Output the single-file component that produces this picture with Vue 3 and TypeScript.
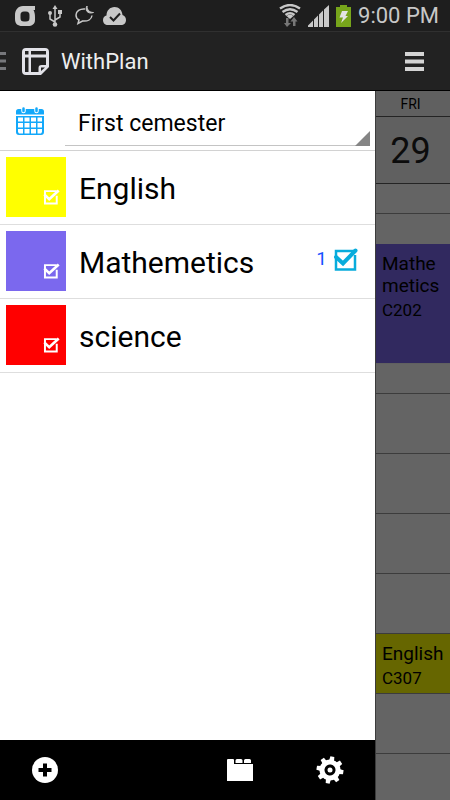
<script setup lang="ts">
import { ref } from 'vue'

interface Subject {
  name: string
  tone: string
  tasks: number
}

interface Slot {
  kind: 'empty' | 'lesson'
  size: string
  tone?: string
  title?: string
  room?: string
}

const semesters = ['First cemester']
const semester = ref(semesters[0])

const subjects: Subject[] = [
  { name: 'English', tone: 'yellow', tasks: 0 },
  { name: 'Mathemetics', tone: 'violet', tasks: 1 },
  { name: 'science', tone: 'red', tasks: 0 },
]

const slots: Slot[] = [
  { kind: 'empty', size: 'half' },
  { kind: 'empty', size: 'lead' },
  { kind: 'lesson', size: 'double', tone: 'violet', title: 'Mathemetics', room: 'C202' },
  { kind: 'empty', size: 'half' },
  { kind: 'empty', size: 'full' },
  { kind: 'empty', size: 'full' },
  { kind: 'empty', size: 'full' },
  { kind: 'empty', size: 'full' },
  { kind: 'lesson', size: 'full', tone: 'yellow', title: 'English', room: 'C307' },
  { kind: 'empty', size: 'full' },
]
</script>

<template>
  <div class="screen">
    <div class="status">
      <div class="status-group left">
        <svg class="carrier" width="20" height="20" viewBox="0 0 20 20">
          <path fill="currentColor" fill-rule="evenodd" d="M8 0H20V4H18.500C19.500 6 20 8 20 11V14C20 18 17 20 13 20H7C3 20 0 18 0 13V9C0 4 3 0 8 0ZM9 5.500C6.500 5.500 5.500 7 5.500 9V12C5.500 14.500 6.500 15.500 9 15.500H11C13.500 15.500 14.500 14.500 14.500 12V9C14.500 7 13.500 5.500 11 5.500Z" />
        </svg>
        <svg class="usb" width="14" height="22" viewBox="0 0 14 22" fill="none" stroke="currentColor" stroke-width="1.500">
          <path d="M7 3V19M7 17L2 14V8M7 15L12 12V7" />
          <path fill="currentColor" stroke="none" d="M7 0L9.500 4H4.500ZM10 5H14V9H10Z" />
          <circle cx="2" cy="8" r="2" fill="currentColor" stroke="none" />
          <circle cx="7" cy="19.500" r="2.300" fill="currentColor" stroke="none" />
        </svg>
        <svg class="chat" width="19" height="19" viewBox="0 0 19 19">
          <path d="M10 3C5 2.500 1 5 1 9C1 11.500 2 13 4 14L3 17.500L7.500 15C13 15.500 16.500 13 17 9.500" fill="none" stroke="currentColor" stroke-width="1.500" />
          <path d="M12 0C9.500 4 12.500 8.500 18.500 6.500C14.500 6.500 12 4 12 0Z" fill="currentColor" stroke="currentColor" />
        </svg>
        <svg class="cloud" width="23" height="18" viewBox="0 0 23 18">
          <path d="M5 18C2 18 0 16 0 13C0 10.500 1.500 9 3.500 8.500C3.500 3.500 7 0 11.500 0C16 0 19 3 19.500 8C21.500 8.500 23 10.500 23 13C23 16 21 18 18 18Z" fill="currentColor" />
          <path d="M7 10L10.500 13.500L17 6.500" fill="none" stroke="#202020" stroke-width="2" />
        </svg>
      </div>
      <div class="status-group right">
        <svg width="22" height="23" viewBox="0 0 22 23">
          <g fill="none" stroke="currentColor" stroke-width="2.300">
            <path d="M1 4.500Q11-2.500 21 4.500M3.500 8Q11 2.500 18.500 8M6.500 11Q11 7.500 15.500 11" />
          </g>
          <path d="M7.500 12Q11 9.500 14.500 12L11 15Z" fill="currentColor" />
          <path d="M7 14H9.500V19H12L8 23L5 19H7ZM14 22V17.500H11.500L15 13L18.500 17.500H16.500V22Z" fill="#777777" />
        </svg>
        <svg class="signal" width="21" height="22" viewBox="0 0 21 22">
          <path fill="currentColor" d="M0 22V20.500L5 15.500V22ZM6 22V14.500L10 10.500V22ZM11 22V9.500L15 5.500V22ZM16 22V4.500L21 0V22Z" />
        </svg>
        <svg class="battery" width="15" height="22" viewBox="0 0 15 22">
          <path fill="#77a51b" d="M4 0H11V2H15V22H0V2H4Z" />
          <path fill="#e4e4e4" d="M6 6H12L9.500 11H12L5 18L7 12.500H3.500Z" />
        </svg>
        <time>9:00 PM</time>
      </div>
    </div>

    <header class="appbar">
      <button class="brand" type="button">
        <svg class="edge" width="6" height="18" viewBox="0 0 6 18"><path d="M0 0H6V3H0ZM0 7.500H6V10.500H0ZM0 15H6V18H0Z" fill="#77787c" /></svg>
        <svg class="logo" width="27" height="27" viewBox="0 0 27 27">
          <path fill="#e2e2e8" fill-rule="evenodd" d="M4 0H23Q27 0 27 4V19L19 27H4Q0 27 0 23V4Q0 0 4 0ZM3 3V6.500H6.500V3ZM9 3V6.500H24V3ZM3 9.500V24H6.500V9.500ZM9 9.500V24H16.500V20Q16.500 17 19.500 17H24V9.500ZM19 19.500V23L23 19.500Z" />
        </svg>
        <span>WithPlan</span>
      </button>
      <button class="menu" type="button" aria-label="Menu">
        <svg width="19" height="19" viewBox="0 0 19 19"><path d="M0 0H19V4H0ZM0 7.500H19V11.500H0ZM0 15H19V19H0Z" fill="#d4d4d4" /></svg>
      </button>
    </header>

    <main class="content">
      <section class="drawer">
        <label class="picker">
          <svg width="28" height="28" viewBox="0 0 28 28">
            <path fill="#12a8fa" fill-rule="evenodd" d="M0 4.500Q0 2 2.500 2H25.500Q28 2 28 4.500V7.500H0ZM0 9H28V25Q28 28 25 28H3Q0 28 0 25ZM2 10.500V14.500H7V10.500ZM8.500 10.500V14.500H13.500V10.500ZM15 10.500V14.500H20V10.500ZM21.500 10.500V14.500H26V10.500ZM2 16V20.500H7V16ZM8.500 16V20.500H13.500V16ZM15 16V20.500H20V16ZM21.500 16V20.500H26V16ZM2 22V25L3 26.500H7V22ZM8.500 22V26.500H13.500V22ZM15 22V26.500H20V22ZM21.500 22V26.500H25L26 25V22Z" />
            <path d="M7.500 2V4M20.500 2V4" stroke="#ffffff" stroke-width="4.500" stroke-linecap="round" />
            <path d="M7.500 1.500V4M20.500 1.500V4" stroke="#12a8fa" stroke-width="2.500" stroke-linecap="round" />
          </svg>
          <span class="field">
            <select v-model="semester" aria-label="Semester">
              <option v-for="item in semesters" :key="item" :value="item">{{ item }}</option>
            </select>
          </span>
        </label>

        <ul class="subjects">
          <li v-for="subject in subjects" :key="subject.name" class="subject">
            <button class="tile" type="button" :class="subject.tone" :aria-label="subject.name + ' tasks'">
              <svg width="17" height="16" viewBox="0 0 26 24" fill="none" stroke="#ffffff">
                <path d="M21 3H3V22H21V10" stroke-width="3" />
                <path d="M2 8L9.500 15.500L24 2" stroke-width="4" />
              </svg>
            </button>
            <span class="name">{{ subject.name }}</span>
            <span v-if="subject.tasks" class="tasks">
              {{ subject.tasks }}
              <svg width="24" height="23" viewBox="0 0 24 23" fill="none" stroke="#08acdc">
                <path d="M20 3H2V21.500H21V7" stroke-width="2.500" />
                <path d="M2 9L9 15.500L21.500 2.500" stroke-width="4" stroke-linecap="round" />
              </svg>
            </span>
          </li>
        </ul>

        <nav class="toolbar">
          <button type="button" aria-label="Add">
            <svg width="26" height="26" viewBox="0 0 26 26"><circle cx="13" cy="13" r="13" fill="#ffffff" /><path d="M13 6.500V19.500M6.500 13H19.500" stroke="#000000" stroke-width="4" /></svg>
          </button>
          <button class="tabs" type="button" aria-label="Semesters">
            <svg width="26" height="22" viewBox="0 0 26 22"><path fill="#ffffff" d="M0 1Q0 0 1 0H6Q7 0 7 1V5H26V22H0ZM8.500 4V1.500Q8.500 0 10 0H14Q15.500 0 15.500 1.500V4ZM17 4V1.500Q17 0 18.500 0H22.500Q24 0 24 1.500V4Z" /></svg>
          </button>
          <button type="button" aria-label="Settings">
            <svg width="28" height="28" viewBox="0 0 28 28">
              <g transform="rotate(10 14 14)">
                <circle cx="14" cy="14" r="8" fill="none" stroke="#ffffff" stroke-width="5" />
                <path v-for="n in 8" :key="n" d="M11.500 5L12 0.500H16L16.500 5Z" fill="#ffffff" :transform="`rotate(${n * 45} 14 14)`" />
              </g>
              <circle cx="14" cy="14" r="2.500" fill="#ffffff" />
            </svg>
          </button>
        </nav>
      </section>

      <section class="day">
        <div class="weekday">FRI</div>
        <div class="date">29</div>
        <div v-for="(slot, index) in slots" :key="index" class="slot" :class="[slot.kind, slot.size, slot.tone]">
          <template v-if="slot.kind === 'lesson'">
            <div class="title">{{ slot.title }}</div>
            <div class="room">{{ slot.room }}</div>
          </template>
        </div>
      </section>
    </main>
  </div>
</template>

<style>
body {
  margin: 0;
  background: #646464;
}
</style>

<style scoped>
.screen {
  display: flex;
  flex-direction: column;
  min-height: 100vh;
  font-family: Roboto, "Liberation Sans", sans-serif;
  color: #000000;
}

button {
  padding: 0;
  border: 0;
  background: none;
  color: inherit;
  font: inherit;
}

svg {
  display: block;
  flex: none;
}

.status {
  display: flex;
  align-items: center;
  justify-content: space-between;
  box-sizing: border-box;
  height: 32px;
  padding: 0 11px 0 15px;
  border-bottom: 1px solid #303030;
  background: #1e1e1e;
  color: #c8c8c8;
}

.status-group {
  display: flex;
  align-items: center;
}

.left {
  gap: 13px;
}

.cloud {
  margin-left: -4px;
}

.right {
  gap: 7px;
}

.status time {
  font-size: 22px;
  line-height: 30px;
}

.appbar {
  display: flex;
  align-items: center;
  justify-content: space-between;
  box-sizing: border-box;
  height: 59px;
  padding-right: 26px;
  border-bottom: 1px solid #000000;
  background: #222222;
}

.brand {
  display: flex;
  align-items: center;
  color: #eeeeee;
  font-size: 22px;
  line-height: 28px;
}

.brand span {
  padding-top: 2px;
}

.logo {
  margin: 0 12px 0 16px;
}

.content {
  display: grid;
  flex: 1;
  grid-template-columns: minmax(0, 1fr) 75px;
}

.drawer {
  display: flex;
  flex-direction: column;
  background: #ffffff;
}

.picker {
  display: flex;
  align-items: center;
  gap: 21px;
  box-sizing: border-box;
  height: 60px;
  padding: 0 5px 0 16px;
  border-bottom: 1px solid #d2d2d2;
}

.field {
  position: relative;
  flex: 1;
  align-self: flex-end;
  margin-bottom: 4px;
  border-bottom: 1px solid #c4c4c4;
}

.field::after {
  position: absolute;
  right: 0;
  bottom: -1px;
  width: 15px;
  height: 15px;
  background: #858585;
  clip-path: polygon(100% 0, 100% 100%, 0 100%);
  content: "";
  pointer-events: none;
}

select {
  display: block;
  width: 100%;
  height: 48px;
  padding: 4px 20px 0 13px;
  border: 0;
  appearance: none;
  background: transparent;
  color: #000000;
  font: 23px Roboto, "Liberation Sans", sans-serif;
}

.subjects {
  flex: 1;
  margin: 0;
  padding: 0;
  list-style: none;
}

.subject {
  display: flex;
  align-items: center;
  gap: 13px;
  padding: 6px 17px 7px 6px;
  border-bottom: 1px solid #dedede;
}

.tile {
  display: flex;
  align-items: flex-end;
  justify-content: flex-end;
  width: 60px;
  height: 60px;
  padding: 0 6px 12px 0;
}

.tile.yellow {
  background: #ffff00;
}

.tile.violet {
  background: #7b68ee;
}

.tile.red {
  background: #ff0000;
}

.name {
  flex: 1;
  padding-top: 3px;
  font-size: 30px;
  line-height: 36px;
}

.tasks {
  display: flex;
  align-items: center;
  align-self: flex-start;
  gap: 7px;
  padding-top: 16px;
  color: #1553ff;
  font-size: 19px;
  line-height: 24px;
}

.toolbar {
  display: flex;
  align-items: center;
  box-sizing: border-box;
  height: 60px;
  padding: 0 31px 0 32px;
  background: #000000;
}

.tabs {
  margin: 0 63px 0 auto;
}

.day {
  display: flex;
  flex-direction: column;
  box-sizing: border-box;
  border-left: 1px solid #3c3c3c;
  background: #646464;
}

.weekday,
.date {
  box-sizing: border-box;
  border-bottom: 1px solid #242424;
  background: #606060;
  text-align: center;
}

.weekday {
  height: 26px;
  padding-right: 5px;
  font-size: 14px;
  line-height: 27px;
}

.date {
  height: 67px;
  padding-right: 5px;
  color: #0c0c0c;
  font-size: 36px;
  line-height: 68px;
}

.slot {
  box-sizing: border-box;
  border-bottom: 1px solid #3c3c3c;
}

.half,
.lead {
  height: 30px;
}

.lead {
  border-bottom-color: transparent;
}

.full {
  height: 60px;
}

.double {
  height: 120px;
}

.lesson {
  padding: 9px 4px 0 6px;
  font-size: 19px;
  line-height: 22px;
  overflow-wrap: anywhere;
}

.lesson.violet {
  border-bottom-color: #606060;
  background: #31295f;
}

.lesson.yellow {
  background: #666600;
}

.room {
  font-size: 17px;
  line-height: 26px;
}
</style>
